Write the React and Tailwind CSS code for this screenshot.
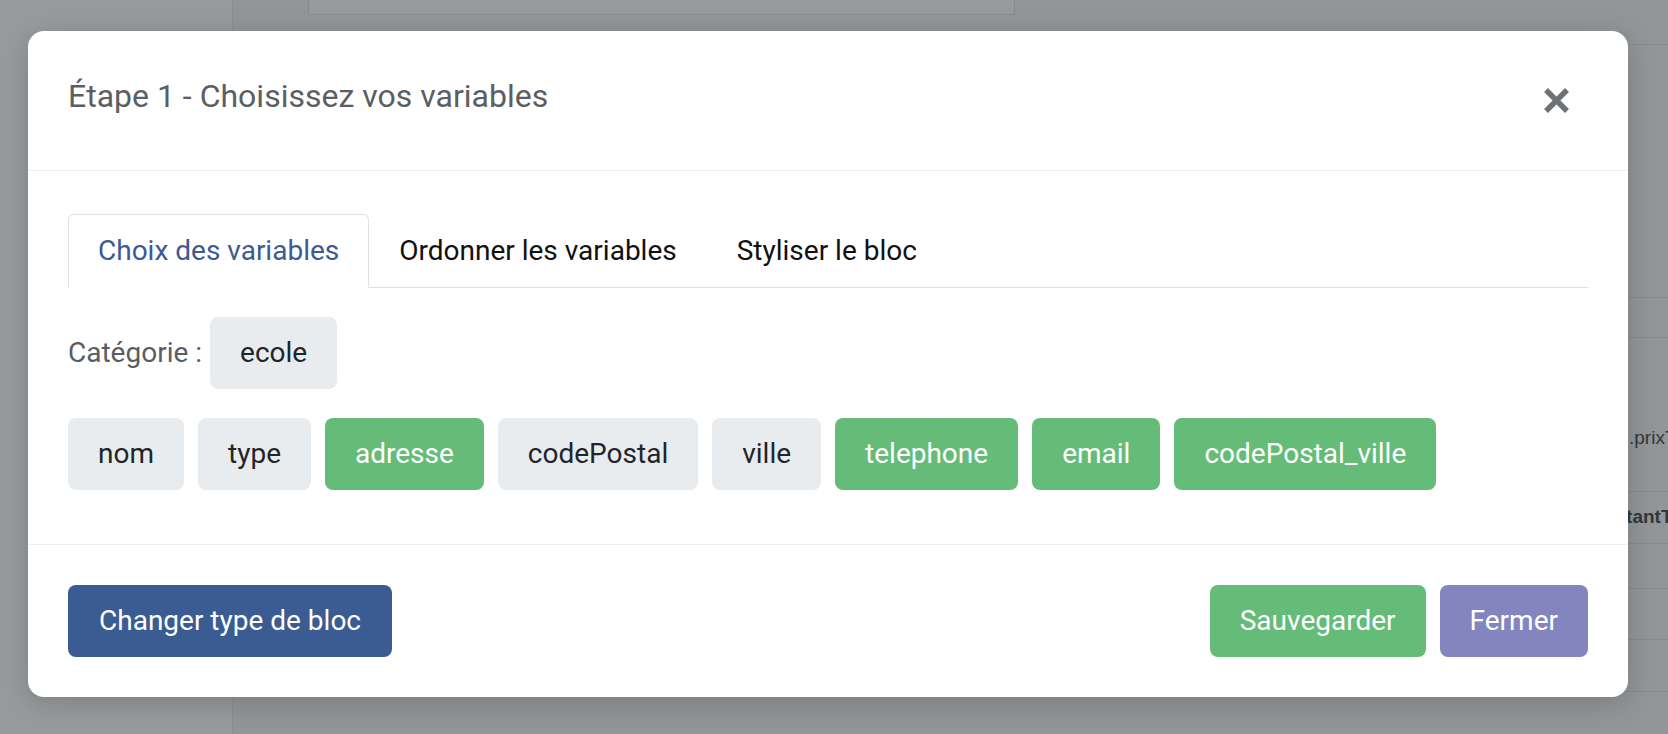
import React from "react";

const variables = [
  { nom: "nom", actif: false },
  { nom: "type", actif: false },
  { nom: "adresse", actif: true },
  { nom: "codePostal", actif: false },
  { nom: "ville", actif: false },
  { nom: "telephone", actif: true },
  { nom: "email", actif: true },
  { nom: "codePostal_ville", actif: true },
];

const onglets = ["Choix des variables", "Ordonner les variables", "Styliser le bloc"];

function Chip({ label, actif }) {
  return (
    <span
      className={
        actif
          ? "px-[30px] py-[15px] leading-[42px] text-[28px] rounded-lg bg-[#65bc78] text-white"
          : "px-[30px] py-[15px] leading-[42px] text-[28px] rounded-lg bg-[#e9ecef] text-[#212529]"
      }
    >
      {label}
    </span>
  );
}

function PageDerriere() {
  return (
    <div className="flex h-full">
      <div className="w-[233px] h-full bg-[#989b9d] border-r border-[#8d9093]"></div>
      <div className="flex-1 flex">
        <div className="ml-[75px] w-[707px] h-[15px] border border-t-0 border-[#868b8f] bg-[#979b9d]"></div>
        <div className="ml-auto w-[200px] flex flex-col text-[#34373a] text-[19px] font-['Liberation_Sans',sans-serif]">
          <div className="h-[45px] border-b border-[#888b8e]"></div>
          <div className="h-[253px] border-b border-[#888b8e]"></div>
          <div className="h-[40px] border-b border-[#888b8e]"></div>
          <div className="h-[154px] border-b border-[#888b8e] flex items-end pb-[39px] pl-[161px] whitespace-nowrap">.prixTotal</div>
          <div className="h-[52px] border-b border-[#888b8e] flex items-center pl-[118px] whitespace-nowrap font-bold">montantTotal</div>
          <div className="h-[45px] border-b border-[#888b8e]"></div>
          <div className="h-[51px] border-b border-[#888b8e]"></div>
          <div className="h-[52px] border-b border-[#888b8e]"></div>
        </div>
      </div>
    </div>
  );
}

export default function App() {
  return (
    <div className="relative w-full h-[734px] overflow-hidden bg-[#939698] font-[Roboto,'Liberation_Sans',sans-serif]">
      <PageDerriere />

      <div className="absolute left-[28px] top-[31px] w-[1600px] bg-white rounded-2xl shadow-[0_6px_30px_rgba(0,0,0,0.18)]">
        <div className="h-[140px] flex items-center justify-between pl-10 pr-[58px] border-b border-[#eceef0]">
          <h1 className="text-[32px] leading-[1.2] text-[#5b5e62] mb-2">Étape 1 - Choisissez vos variables</h1>
          <svg width="27" height="27" viewBox="0 0 27 27">
            <path d="M3 3 L24 24 M24 3 L3 24" stroke="#6e7175" strokeWidth="5.5" />
          </svg>
        </div>

        <div className="pt-[43px] px-10 pb-[54px]">
          <div className="flex border-b border-[#dee2e6]">
            {onglets.map((o, i) => (
              <div
                key={o}
                className={
                  i === 0
                    ? "-mb-px px-[29px] py-[15px] leading-[42px] text-[28px] text-[#3b5b92] bg-white border border-[#dee2e6] border-b-white rounded-t-md"
                    : "-mb-px px-[30px] py-[15px] leading-[42px] text-[28px] text-[#111] border-y border-transparent"
                }
              >
                {o}
              </div>
            ))}
          </div>

          <div className="mt-[29px] flex items-center gap-2">
            <span className="text-[28px] text-[#5a5d61]">Catégorie :</span>
            <Chip label="ecole" actif={false} />
          </div>

          <div className="mt-[29px] flex flex-wrap gap-[14px]">
            {variables.map((v) => (
              <Chip key={v.nom} label={v.nom} actif={v.actif} />
            ))}
          </div>
        </div>

        <div className="border-t border-[#eceef0] px-10 pt-10 pb-10 flex items-center">
          <button className="px-[31px] py-[15px] leading-[42px] text-[28px] rounded-lg bg-[#3b5b93] text-white">
            Changer type de bloc
          </button>
          <div className="ml-auto flex gap-[14px]">
            <button className="px-[30px] py-[15px] leading-[42px] text-[28px] rounded-lg bg-[#65bc78] text-white">
              Sauvegarder
            </button>
            <button className="px-[30px] py-[15px] leading-[42px] text-[28px] rounded-lg bg-[#8484bf] text-white">
              Fermer
            </button>
          </div>
        </div>
      </div>
    </div>
  );
}
